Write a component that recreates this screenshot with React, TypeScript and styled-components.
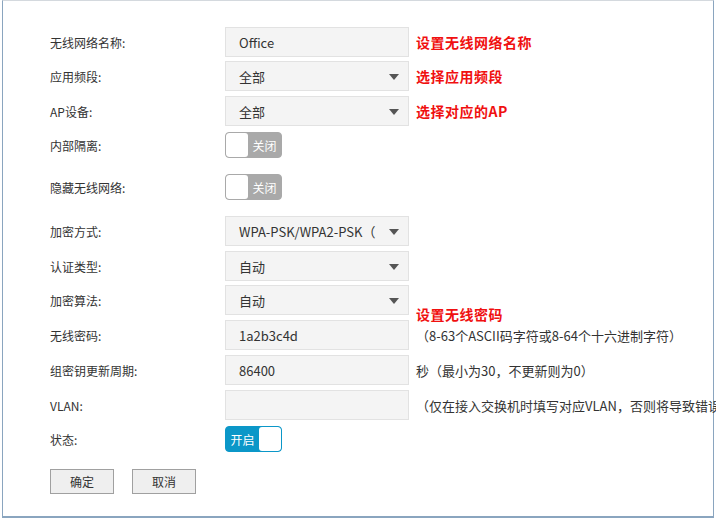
import { createGlobalStyle } from 'styled-components'
import styled from 'styled-components'
import type { FC, ReactNode } from 'react'

const Global = createGlobalStyle`
  html, body { margin: 0; padding: 0; background: #fff; }
  body { font-family: "Noto Sans CJK SC", "Noto Sans", sans-serif; color: #333; }
`

const Frame = styled.div`
  box-sizing: border-box;
  border: 1px solid #8aa5bf;
  border-top-color: #d4d9de;
  border-bottom-width: 2px;
  margin-left: 2px;
  width: 712px;
  height: 518px;
  padding: 26px 0 0 47px;
`

const Row = styled.div<{ $gap?: number }>`
  display: flex;
  align-items: center;
  height: 30px;
  margin-top: ${(p) => p.$gap ?? 5}px;
  &:first-child { margin-top: 0; }
`

const Label = styled.div`
  width: 175px;
  flex-shrink: 0;
  font-size: 12px;
`

const Field = styled.div`
  position: relative;
  flex-shrink: 0;
  width: 169px;
  height: 28px;
  border: 1px solid #e2e2e2;
  background: #f4f4f4;
  display: flex;
  align-items: center;
  padding-left: 13px;
  font-size: 13px;
  color: #333;
  margin-right: 7px;
  white-space: nowrap;
  overflow: hidden;
`

const Arrow = styled.span`
  position: absolute;
  right: 9px;
  top: 12px;
  border-left: 5px solid transparent;
  border-right: 5px solid transparent;
  border-top: 6px solid #555;
`

const Note = styled.div`
  position: relative;
  font-size: 13px;
  color: #333;
  white-space: nowrap;
`

const Red = styled.div`
  color: #f01010;
  font-size: 14px;
  font-weight: bold;
  letter-spacing: 0.5px;
  white-space: nowrap;
`

const RedOver = styled(Red)`
  position: absolute;
  left: 0;
  top: -22px;
`

const Toggle = styled.div<{ $on?: boolean }>`
  width: 55px;
  height: 24px;
  border: 1px solid ${(p) => (p.$on ? '#0b97c8' : '#a9a9a9')};
  border-radius: 4px;
  background: ${(p) => (p.$on ? '#0b97c8' : '#a9a9a9')};
  display: flex;
  flex-direction: ${(p) => (p.$on ? 'row' : 'row-reverse')};
  overflow: hidden;
  font-size: 12px;
  color: #fff;
`

const ToggleText = styled.span`
  flex: 1;
  display: flex;
  align-items: center;
  justify-content: center;
`

const Knob = styled.span`
  width: 22px;
  background: #fff;
  border-radius: 3px;
`

const Buttons = styled.div`
  display: flex;
  gap: 18px;
  margin-top: 15px;
`

const Button = styled.button`
  width: 64px;
  height: 25px;
  border: 1px solid #a0a0a0;
  background: #efefef;
  font-family: inherit;
  font-size: 12px;
  color: #333;
  padding: 0;
`

const Select: FC<{ children: ReactNode }> = ({ children }) => (
  <Field>
    {children}
    <Arrow />
  </Field>
)

const Switch: FC<{ on?: boolean }> = ({ on }) => (
  <Toggle $on={on}>
    <ToggleText>{on ? '开启' : '关闭'}</ToggleText>
    <Knob />
  </Toggle>
)

export default function App() {
  return (
    <>
      <Global />
      <Frame>
        <Row>
          <Label>无线网络名称:</Label>
          <Field>Office</Field>
          <Red>设置无线网络名称</Red>
        </Row>
        <Row $gap={4}>
          <Label>应用频段:</Label>
          <Select>全部</Select>
          <Red>选择应用频段</Red>
        </Row>
        <Row>
          <Label>AP设备:</Label>
          <Select>全部</Select>
          <Red>选择对应的AP</Red>
        </Row>
        <Row $gap={4}>
          <Label>内部隔离:</Label>
          <Switch />
        </Row>
        <Row $gap={12}>
          <Label>隐藏无线网络:</Label>
          <Switch />
        </Row>
        <Row $gap={14}>
          <Label>加密方式:</Label>
          <Select>WPA-PSK/WPA2-PSK（</Select>
        </Row>
        <Row>
          <Label>认证类型:</Label>
          <Select>自动</Select>
        </Row>
        <Row $gap={4}>
          <Label>加密算法:</Label>
          <Select>自动</Select>
        </Row>
        <Row>
          <Label>无线密码:</Label>
          <Field>1a2b3c4d</Field>
          <Note>
            <RedOver>设置无线密码</RedOver>（8-63个ASCII码字符或8-64个十六进制字符）
          </Note>
        </Row>
        <Row>
          <Label>组密钥更新周期:</Label>
          <Field>86400</Field>
          <Note>秒（最小为30，不更新则为0）</Note>
        </Row>
        <Row>
          <Label>VLAN:</Label>
          <Field />
          <Note>（仅在接入交换机时填写对应VLAN，否则将导致错误）</Note>
        </Row>
        <Row $gap={4}>
          <Label>状态:</Label>
          <Switch on />
        </Row>
        <Buttons>
          <Button>确定</Button>
          <Button>取消</Button>
        </Buttons>
      </Frame>
    </>
  )
}
